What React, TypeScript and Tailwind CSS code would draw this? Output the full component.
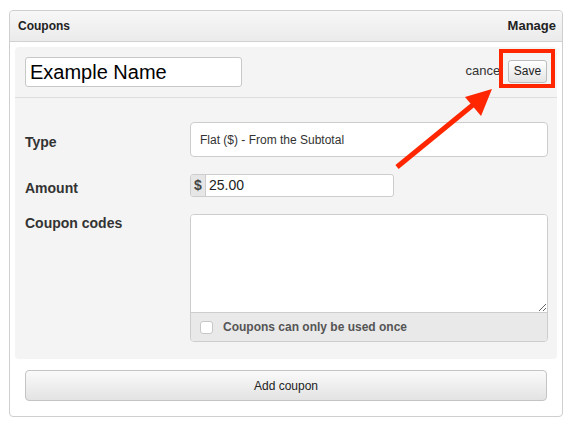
import { useState } from 'react'

export default function App() {
  const [name, setName] = useState('Example Name')
  const [amount, setAmount] = useState('25.00')
  const [once, setOnce] = useState(false)

  return (
    <div className="relative w-[571px] h-[431px] bg-white pt-[10px] pl-[9px] font-['Liberation_Sans',Arial,sans-serif] text-[#333]">
      {/* PANEL */}
      <div className="w-[554px] h-[407px] border border-[#cfcfcf] rounded-[4px] flex flex-col">
        <div className="h-[31px] shrink-0 flex items-center justify-between pl-[8px] pr-[6px] bg-gradient-to-b from-[#f7f7f7] to-[#ebebeb] border-b border-[#d2d2d2] rounded-t-[4px]">
          <span className="text-[12px] font-bold text-[#222]">Coupons</span>
          <span className="text-[13px] font-bold text-[#222]">Manage</span>
        </div>

        <div className="px-[5px] pt-[5px]">
          {/* EDIT CARD */}
          <div className="h-[312px] bg-[#f4f4f4] rounded-[4px] flex flex-col">
            <div className="h-[51px] shrink-0 flex items-center justify-between pl-[10px] pr-[10px] border-b border-[#dedede]">
              <input
                value={name}
                onChange={e => setName(e.target.value)}
                className="w-[217px] h-[30px] px-[4px] bg-white border border-[#c8c8c8] rounded-[3px] text-[20px] text-black outline-none"
              />
              <div className="flex items-center gap-[5px] mt-[-2px]">
                <span className="text-[13px] text-[#333]">cancel</span>
                <button className="w-[39px] h-[23px] border border-[#bdbdbd] rounded-[3px] bg-gradient-to-b from-white to-[#e4e4e4] text-[12px] text-[#222]">
                  Save
                </button>
              </div>
            </div>

            <div className="flex flex-col gap-[17px] pt-[24px] pl-[10px] pr-[9px]">
              <div className="flex items-center">
                <div className="w-[165px] text-[14px] leading-[16px] font-bold mt-[4px]">Type</div>
                <div className="flex-1 h-[35px] flex items-center px-[9px] bg-white border border-[#cdcdcd] rounded-[4px] text-[12px] text-[#333]">
                  Flat ($) - From the Subtotal
                </div>
              </div>

              <div className="flex items-center">
                <div className="w-[165px] text-[14px] leading-[16px] font-bold mt-[4px]">Amount</div>
                <div className="w-[204px] h-[23px] flex border border-[#cdcdcd] rounded-[3px] overflow-hidden bg-white">
                  <span className="w-[19px] flex items-center justify-center bg-[#e6e6e6] border-r border-[#cdcdcd] text-[14px] font-bold text-[#444]">$</span>
                  <input
                    value={amount}
                    onChange={e => setAmount(e.target.value)}
                    className="flex-1 px-[3px] text-[14px] text-[#222] outline-none"
                  />
                </div>
              </div>

              <div className="flex items-start">
                <div className="w-[165px] text-[14px] font-bold mt-[-1px]">Coupon codes</div>
                <div className="flex-1 flex flex-col border border-[#cdcdcd] rounded-[4px] overflow-hidden">
                  <textarea className="h-[98px] bg-white border-b border-[#cdcdcd] outline-none resize-y block" />
                  <label className="h-[28px] flex items-center gap-[10px] pl-[9px] bg-[#e9e9e9] text-[12px] font-bold text-[#555]">
                    <input
                      type="checkbox"
                      checked={once}
                      onChange={e => setOnce(e.target.checked)}
                      className="appearance-none w-[13px] h-[13px] bg-white border border-[#c7c7c7] rounded-[3px]"
                    />
                    Coupons can only be used once
                  </label>
                </div>
              </div>
            </div>
          </div>

          <button className="mt-[11px] ml-[10px] w-[522px] h-[31px] border border-[#c4c4c4] rounded-[4px] bg-gradient-to-b from-[#fafafa] to-[#e3e3e3] text-[12px] text-[#222]">
            Add coupon
          </button>
        </div>
      </div>

      {/* ANNOTATION */}
      <div className="absolute left-[499px] top-[49px] w-[56px] h-[39px] border-[4px] border-[#ff2600]" />
      <svg className="absolute left-0 top-0 pointer-events-none" width="571" height="431">
        <line x1="397" y1="167" x2="474" y2="104" stroke="#ff2600" strokeWidth="5" />
        <polygon points="492,89 465,97 481,116" fill="#ff2600" />
      </svg>
    </div>
  )
}
